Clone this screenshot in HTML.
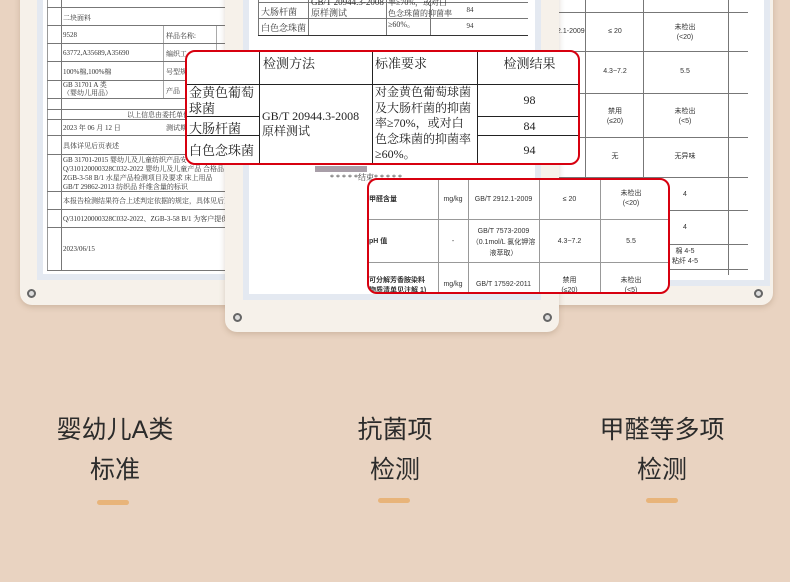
<!DOCTYPE html>
<html><head><meta charset="utf-8"><style>
*{margin:0;padding:0;box-sizing:border-box}
body{width:790px;height:582px;overflow:hidden;background:#e9d3c1;font-family:"Liberation Sans","Noto Sans CJK SC",sans-serif;position:relative}
.a{position:absolute}
.card{position:absolute;background:#f6f1ea;border-radius:12px;box-shadow:0 2px 6px rgba(120,90,60,.25)}
.paper{position:absolute;background:#fff;border:6px solid #e4e9f1}
.hl{position:absolute;height:1px;background:#777}
.vl{position:absolute;width:1px;background:#777}
.t{position:absolute;font-size:7px;color:#333;white-space:nowrap;font-family:"Liberation Serif","Noto Serif CJK SC",serif}
.tc{position:absolute;font-size:7px;color:#333;text-align:center;line-height:10px;font-family:"Liberation Sans","Noto Sans CJK SC",sans-serif}
.scr{position:absolute;width:9px;height:9px;border-radius:50%;border:2px solid #666;background:#ddd}
.red{position:absolute;border:2.5px solid #d7000f;border-radius:10px;background:#fff;overflow:hidden}
.cap{position:absolute;width:200px;text-align:center;font-size:25px;color:#2b2b2b;font-family:"Liberation Sans","Noto Sans CJK SC",sans-serif;line-height:40px}
.bar{position:absolute;width:32px;height:5px;border-radius:3px;background:#e8b47a}
.s{font-family:"Liberation Serif","Noto Serif CJK SC",serif;color:#222}
</style></head><body>

<!-- left card -->
<div class="card" style="left:20px;top:-20px;width:250px;height:325px"></div>
<div class="paper" style="left:37px;top:-10px;width:220px;height:290px"></div>
<div class="vl" style="left:47px;top:0;height:270px;background:#999"></div>
<div class="vl" style="left:61px;top:0;height:270px"></div>
<div class="vl" style="left:163px;top:25px;height:73px;background:#aaa"></div>
<div class="vl" style="left:216px;top:25px;height:73px;background:#aaa"></div>
<div class="hl" style="left:47px;top:7px;width:200px"></div>
<div class="hl" style="left:47px;top:25px;width:200px"></div>
<div class="hl" style="left:47px;top:43px;width:200px"></div>
<div class="hl" style="left:47px;top:61px;width:200px"></div>
<div class="hl" style="left:47px;top:80px;width:200px"></div>
<div class="hl" style="left:47px;top:98px;width:200px"></div>
<div class="hl" style="left:47px;top:109px;width:200px"></div>
<div class="hl" style="left:47px;top:119px;width:200px"></div>
<div class="hl" style="left:47px;top:135px;width:200px"></div>
<div class="hl" style="left:47px;top:154px;width:200px"></div>
<div class="hl" style="left:47px;top:191px;width:200px"></div>
<div class="hl" style="left:47px;top:209px;width:200px"></div>
<div class="hl" style="left:47px;top:227px;width:200px"></div>
<div class="hl" style="left:47px;top:270px;width:200px"></div>
<div class="t" style="left:63px;top:13px">二块面料</div>
<div class="t" style="left:63px;top:31px">9528</div>
<div class="t" style="left:166px;top:31px">样品名称:</div>
<div class="t" style="left:63px;top:49px">63772,A35689,A35690</div>
<div class="t" style="left:166px;top:49px">编织工</div>
<div class="t" style="left:63px;top:67px">100%棉,100%棉</div>
<div class="t" style="left:166px;top:67px">号型规</div>
<div class="t" style="left:63px;top:81px;line-height:8px">GB 31701 A 类<br>（婴幼儿用品）</div>
<div class="t" style="left:166px;top:86px">产品</div>
<div class="t" style="left:127px;top:110px">以上信息由委托单位</div>
<div class="t" style="left:63px;top:123px">2023 年 06 月 12 日</div>
<div class="t" style="left:166px;top:123px">测试期</div>
<div class="t" style="left:63px;top:141px">具体详见后页表述</div>
<div class="t" style="left:63px;top:156px;line-height:9px">GB 31701-2015 婴幼儿及儿童纺织产品安<br>Q/310120000328C032-2022 婴幼儿及儿童产品 合格品<br>ZGB-3-58 B/1 水星产品检测项目及要求 床上用品<br>GB/T 29862-2013 纺织品 纤维含量的标识</div>
<div class="t" style="left:63px;top:196px">本报告检测结果符合上述判定依据的规定，具体见后页</div>
<div class="t" style="left:63px;top:214px">Q/310120000328C032-2022、ZGB-3-58 B/1 为客户提供</div>
<div class="t" style="left:63px;top:245px">2023/06/15</div>
<div class="scr" style="left:27px;top:289px"></div>

<!-- right card -->
<div class="card" style="left:440px;top:-20px;width:333px;height:325px"></div>
<div class="paper" style="left:520px;top:-10px;width:250px;height:296px"></div>
<div class="vl" style="left:585px;top:0;height:178px"></div>
<div class="vl" style="left:643px;top:0;height:290px"></div>
<div class="vl" style="left:728px;top:0;height:275px"></div>
<div class="hl" style="left:540px;top:12px;width:208px"></div>
<div class="hl" style="left:540px;top:51px;width:208px"></div>
<div class="hl" style="left:540px;top:93px;width:208px"></div>
<div class="hl" style="left:540px;top:137px;width:208px"></div>
<div class="hl" style="left:540px;top:177px;width:208px"></div>
<div class="hl" style="left:660px;top:210px;width:88px"></div>
<div class="hl" style="left:660px;top:244px;width:88px"></div>
<div class="hl" style="left:660px;top:269px;width:88px"></div>
<div class="tc" style="left:540px;top:27px;width:50px">2912.1-2009</div>
<div class="tc" style="left:590px;top:27px;width:50px">≤ 20</div>
<div class="tc" style="left:660px;top:23px;width:50px">未检出<br>(&lt;20)</div>
<div class="tc" style="left:590px;top:67px;width:50px">4.3~7.2</div>
<div class="tc" style="left:660px;top:67px;width:50px">5.5</div>
<div class="tc" style="left:590px;top:107px;width:50px">禁用<br>(≤20)</div>
<div class="tc" style="left:660px;top:107px;width:50px">未检出<br>(&lt;5)</div>
<div class="tc" style="left:590px;top:152px;width:50px">无</div>
<div class="tc" style="left:660px;top:152px;width:50px">无异味</div>
<div class="tc" style="left:660px;top:190px;width:50px">4</div>
<div class="tc" style="left:660px;top:223px;width:50px">4</div>
<div class="tc" style="left:660px;top:247px;width:50px">棉 4-5<br>粘纤 4-5</div>
<div class="scr" style="left:754px;top:289px"></div>

<!-- middle card -->
<div class="card" style="left:225px;top:-20px;width:334px;height:352px"></div>
<div class="paper" style="left:243px;top:-10px;width:298px;height:310px"></div>
<div class="vl" style="left:258px;top:0;height:36px"></div>
<div class="vl" style="left:308px;top:0;height:36px"></div>
<div class="vl" style="left:386px;top:0;height:36px"></div>
<div class="vl" style="left:430px;top:0;height:36px"></div>
<div class="hl" style="left:258px;top:2px;width:270px"></div>
<div class="hl" style="left:258px;top:18px;width:270px"></div>
<div class="hl" style="left:258px;top:35px;width:270px;background:#333"></div>
<div class="t" style="left:261px;top:5px;font-size:9px">大肠杆菌</div>
<div class="t" style="left:261px;top:21px;font-size:9px">白色念珠菌</div>
<div class="t" style="left:311px;top:-3px;font-size:9px;line-height:11px">GB/T 20944.3-2008<br>原样测试</div>
<div class="t" style="left:388px;top:-3px;font-size:8px;line-height:11px">率≥70%，或对白<br>色念珠菌的抑菌率<br>≥60%。</div>
<div class="tc" style="left:430px;top:5px;width:80px;font-family:'Liberation Serif',serif">84</div>
<div class="tc" style="left:430px;top:21px;width:80px;font-family:'Liberation Serif',serif">94</div>
<div class="a" style="left:315px;top:166px;width:52px;height:6px;background:#a89ea8"></div>
<div class="t" style="left:330px;top:172px;font-size:8px">* * * * *结束* * * * *</div>
<div class="scr" style="left:233px;top:313px"></div>
<div class="scr" style="left:543px;top:313px"></div>

<!-- red box 1 -->
<div class="red" style="left:185px;top:50px;width:395px;height:115px">
 <div class="vl" style="left:72px;top:0;height:115px;background:#222"></div>
 <div class="vl" style="left:185px;top:0;height:115px;background:#222"></div>
 <div class="vl" style="left:290px;top:0;height:115px;background:#222"></div>
 <div class="hl" style="left:0;top:32px;width:395px;background:#222"></div>
 <div class="hl" style="left:0;top:64px;width:72px;background:#222"></div>
 <div class="hl" style="left:290px;top:64px;width:105px;background:#222"></div>
 <div class="hl" style="left:0;top:83px;width:72px;background:#222"></div>
 <div class="hl" style="left:290px;top:83px;width:105px;background:#222"></div>
 <div class="a s" style="left:76px;top:1px;font-size:13px">检测方法</div>
 <div class="a s" style="left:188px;top:1px;font-size:13px">标准要求</div>
 <div class="a s" style="left:290px;top:1px;width:105px;text-align:center;font-size:13px">检测结果</div>
 <div class="a s" style="left:2px;top:33px;font-size:13px;line-height:16px">金黄色葡萄<br>球菌</div>
 <div class="a s" style="left:2px;top:66px;font-size:13px">大肠杆菌</div>
 <div class="a s" style="left:2px;top:88px;font-size:13px">白色念珠菌</div>
 <div class="a s" style="left:75px;top:57px;font-size:12px;line-height:15px">GB/T 20944.3-2008<br>原样测试</div>
 <div class="a s" style="left:188px;top:33px;font-size:12px;line-height:15.5px">对金黄色葡萄球菌<br>及大肠杆菌的抑菌<br>率≥70%，或对白<br>色念珠菌的抑菌率<br>≥60%。</div>
 <div class="a s" style="left:290px;top:41px;width:105px;text-align:center;font-size:12px">98</div>
 <div class="a s" style="left:290px;top:67px;width:105px;text-align:center;font-size:12px">84</div>
 <div class="a s" style="left:290px;top:91px;width:105px;text-align:center;font-size:12px">94</div>
</div>

<!-- red box 2 -->
<div class="red" style="left:367px;top:178px;width:303px;height:116px">
 <div class="vl" style="left:69px;top:0;height:116px;background:#999"></div>
 <div class="vl" style="left:99px;top:0;height:116px;background:#999"></div>
 <div class="vl" style="left:170px;top:0;height:116px;background:#999"></div>
 <div class="vl" style="left:231px;top:0;height:116px;background:#999"></div>
 <div class="hl" style="left:0;top:39px;width:303px;background:#999"></div>
 <div class="hl" style="left:0;top:82px;width:303px;background:#999"></div>
 <div class="tc" style="left:0;top:15px;font-weight:bold;width:60px;text-align:left">甲醛含量</div>
 <div class="tc" style="left:69px;top:15px;width:30px">mg/kg</div>
 <div class="tc" style="left:99px;top:15px;width:71px">GB/T 2912.1-2009</div>
 <div class="tc" style="left:170px;top:15px;width:61px">≤ 20</div>
 <div class="tc" style="left:231px;top:9px;width:62px">未检出<br>(&lt;20)</div>
 <div class="tc" style="left:0;top:57px;font-weight:bold;width:60px;text-align:left">pH 值</div>
 <div class="tc" style="left:69px;top:57px;width:30px">-</div>
 <div class="tc" style="left:99px;top:46px;width:71px;line-height:11px">GB/T 7573-2009<br>（0.1mol/L 氯化钾溶<br>液萃取）</div>
 <div class="tc" style="left:170px;top:57px;width:61px">4.3~7.2</div>
 <div class="tc" style="left:231px;top:57px;width:62px">5.5</div>
 <div class="tc" style="left:0;top:96px;font-weight:bold;width:70px;text-align:left">可分解芳香胺染料<br>物质清单见注解 1)</div>
 <div class="tc" style="left:69px;top:100px;width:30px">mg/kg</div>
 <div class="tc" style="left:99px;top:100px;width:71px">GB/T 17592-2011</div>
 <div class="tc" style="left:170px;top:96px;width:61px">禁用<br>(≤20)</div>
 <div class="tc" style="left:231px;top:96px;width:62px">未检出<br>(&lt;5)</div>
</div>

<!-- captions -->
<div class="cap" style="left:15px;top:410px">婴幼儿A类<br>标准</div>
<div class="cap" style="left:295px;top:410px">抗菌项<br>检测</div>
<div class="cap" style="left:562px;top:410px">甲醛等多项<br>检测</div>
<div class="bar" style="left:97px;top:500px"></div>
<div class="bar" style="left:378px;top:498px"></div>
<div class="bar" style="left:646px;top:498px"></div>
</body></html>
